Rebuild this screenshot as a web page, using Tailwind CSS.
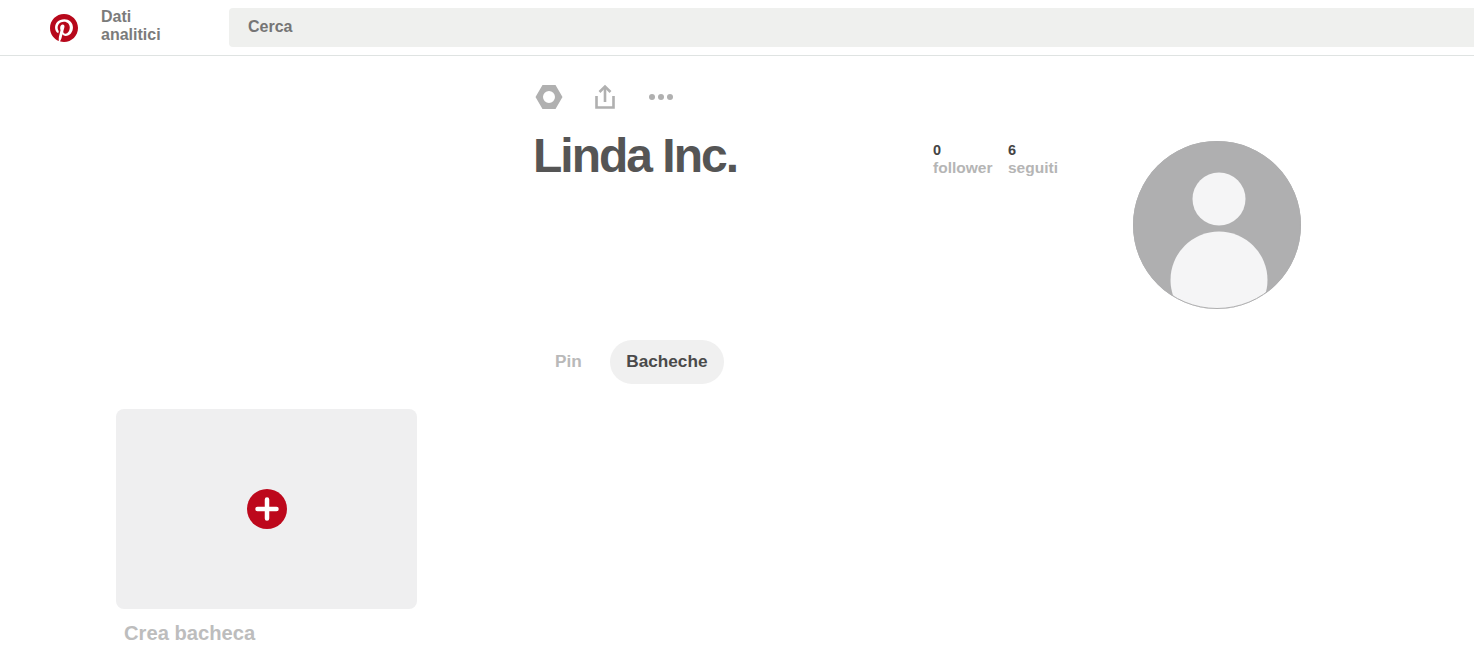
<!DOCTYPE html>
<html lang="en">
<head>
    <meta charset="UTF-8">
    <meta name="viewport" content="width=device-width, initial-scale=1.0">
    <script src="https://cdn.jsdelivr.net/npm/@tailwindcss/browser@4"></script>
    <title>Linda Inc.</title>
</head>
<body class="h-[666px] overflow-hidden bg-white font-['Liberation_Sans',sans-serif]">

    <!-- Header -->
    <header class="flex h-[56px] items-center border-b border-[#dfe3e2]">
        <svg class="ml-[50px] h-[28px] w-[28px]" viewBox="0 0 24 24">
            <path fill="#b7081b" d="M12 0C5.37 0 0 5.37 0 12c0 5.08 3.16 9.42 7.63 11.17-.11-.95-.2-2.41.04-3.44.22-.94 1.4-5.96 1.4-5.96s-.36-.72-.36-1.78c0-1.67.97-2.92 2.17-2.92 1.02 0 1.52.77 1.52 1.69 0 1.03-.66 2.57-.99 3.99-.28 1.19.6 2.16 1.77 2.16 2.13 0 3.76-2.24 3.76-5.48 0-2.86-2.06-4.87-5-4.87-3.4 0-5.4 2.55-5.4 5.19 0 1.03.4 2.13.89 2.73.1.12.11.22.08.34-.09.38-.29 1.19-.33 1.36-.05.22-.17.27-.4.16-1.5-.7-2.43-2.89-2.43-4.65 0-3.78 2.75-7.26 7.92-7.26 4.16 0 7.39 2.96 7.39 6.93 0 4.13-2.6 7.46-6.22 7.46-1.21 0-2.36-.63-2.75-1.38l-.75 2.85c-.27 1.04-1 2.35-1.49 3.15 1.12.35 2.31.53 3.55.53 6.63 0 12-5.37 12-12S18.63 0 12 0z"/>
        </svg>
        <div class="ml-[23px] mb-[3px] w-[128px] text-[16px] leading-[18px] font-bold text-[#7b7b7b]">Dati<br>analitici</div>
        <div class="mb-[1px] flex h-[39px] flex-1 items-center rounded-l-[4px] bg-[#eff0ee] pl-[19px] text-[16px] font-bold text-[#757575]">Cerca</div>
    </header>

    <!-- Profile -->
    <section class="flex h-[269px] pl-[534px]">
        <div class="w-[399px] pt-[26px]">
            <div class="flex h-[30px] items-center">
                <svg class="ml-[1px] h-[26px] w-[28px]" viewBox="0 0 28 26">
                    <path fill="#b0b0b0" fill-rule="evenodd" d="M7.500 1h13L27.500 13l-7 12h-13L.5 13zM14 7a6 6 0 1 0 0 12 6 6 0 0 0 0-12z"/>
                </svg>
                <svg class="ml-[32px] h-[26px] w-[20px]" viewBox="0 0 20 26" fill="none" stroke="#b0b0b0" stroke-width="2.600">
                    <path d="M1.500 12v11.500h17V12"/>
                    <path d="M10 18V3"/>
                    <path d="M4.500 8 10 2.500 15.500 8"/>
                </svg>
                <div class="ml-[34px] flex gap-[3px]">
                    <span class="h-[6px] w-[6px] rounded-full bg-[#b0b0b0]"></span>
                    <span class="h-[6px] w-[6px] rounded-full bg-[#b0b0b0]"></span>
                    <span class="h-[6px] w-[6px] rounded-full bg-[#b0b0b0]"></span>
                </div>
            </div>
            <h1 class="mt-[14px] -ml-[1px] text-[48px] leading-[60px] font-bold tracking-[-2px] text-[#555555]">Linda Inc.</h1>
        </div>
        <div class="flex pt-[85px] text-[15.500px] leading-[18px] font-bold">
            <div class="w-[75px]">
                <div class="text-[14.500px] text-[#444444]">0</div>
                <div class="text-[#b5b5b5]">follower</div>
            </div>
            <div class="w-[125px]">
                <div class="text-[14.500px] text-[#444444]">6</div>
                <div class="text-[#b5b5b5]">seguiti</div>
            </div>
        </div>
        <svg class="mt-[85px] h-[168px] w-[168px]" viewBox="0 0 168 168">
            <defs><clipPath id="avatar"><circle cx="84" cy="84" r="84"/></clipPath></defs>
            <circle cx="84" cy="84" r="84" fill="#afafb0"/>
            <circle cx="86" cy="58" r="26.500" fill="#f5f5f6"/>
            <g clip-path="url(#avatar)">
                <circle cx="86" cy="139" r="48.500" fill="#f5f5f6"/>
            </g>
            <circle cx="84" cy="84" r="83.500" fill="none" stroke="#afafb0"/>
        </svg>
    </section>

    <!-- Tabs -->
    <nav class="flex h-[44px] items-center pl-[555px] mt-[15px] text-[17.200px] font-bold">
        <span class="text-[#b9b9b9]">Pin</span>
        <span class="ml-[28px] flex h-[44px] items-center rounded-full bg-[#f0f0f0] px-[16.500px] text-[#4a4a4a]">Bacheche</span>
    </nav>

    <!-- Boards -->
    <section class="mt-[25px] ml-[116px] w-[301px]">
        <div class="flex h-[200px] items-center justify-center rounded-[8px] bg-[#efeff0]">
            <svg class="h-[40px] w-[40px]" viewBox="0 0 40 40">
                <circle cx="20" cy="20" r="20" fill="#bd081c"/>
                <path d="M20 10.500v19M10.500 20h19" stroke="#ffffff" stroke-width="4.500" stroke-linecap="round"/>
            </svg>
        </div>
        <div class="mt-[12px] pl-[8px] text-[20.200px] leading-[24px] font-bold text-[#bdbdbd]">Crea bacheca</div>
    </section>

</body>
</html>
